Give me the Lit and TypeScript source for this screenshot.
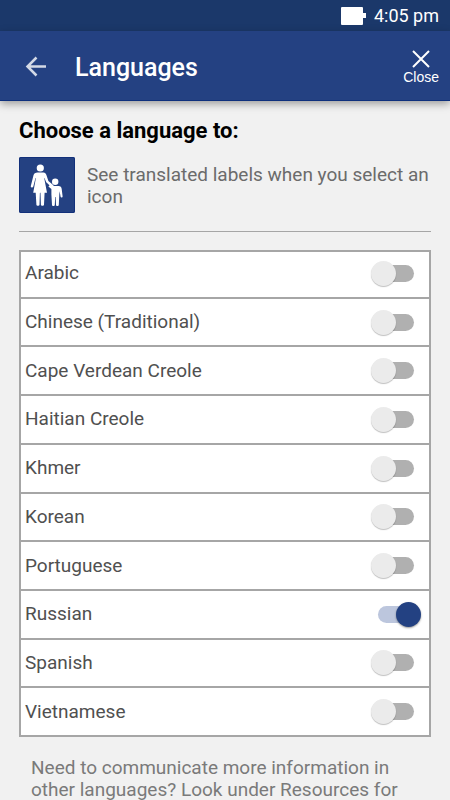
import { LitElement, html, css, svg } from "lit";
import { customElement, property, state } from "lit/decorators.js";

interface Language {
  name: string;
  on: boolean;
}

const familyIcon = svg`
  <circle cx="21.3" cy="11" r="3.6"/>
  <path d="M18.500 15.500h6c1.500 0 2.400 1 2.900 2.400l2 6 4.700 4.200c.8.7.6 1.500 0 2-.6.4-1.200.3-1.800-.2l-5.100-4.600-1.700-4.300-.3.100 2.800 14.600h-2.400l-.6 12c-.1 1.500-3 1.500-3.100 0l-.4-12h-.6l-.4 12c-.1 1.500-3 1.500-3.100 0l-.7-12h-2.500l2.700-14.600-.4-.100-2.200 8.600c-.5 1.600-2.900 1-2.500-.6l2.700-10.800c.5-1.700 1.900-2.700 4-2.700z"/>
  <circle cx="36.200" cy="24.800" r="3.200"/>
  <path d="M33.500 29h6c2 0 3 1.200 3.200 3l.9 7.200c.2 1.500-1.900 1.700-2.100.3l-.8-5.200-.4 3.200-.5 10.500c-.1 1.300-2.700 1.300-2.800 0l-.3-8h-.5l-.4 8c-.1 1.300-2.700 1.300-2.800 0l-.6-10.500v-5.500l-3-2.500 1.700-1.700c.8.800 1.400 1.200 2.400 1.200z"/>
`;

@customElement("language-row")
export class LanguageRow extends LitElement {
  @property() name = "";
  @property({ type: Boolean }) on = false;

  static styles = css`
    :host {
      display: flex;
    }
    .row {
      flex: 1;
      display: flex;
      align-items: center;
      justify-content: space-between;
      padding: 0 8px 0 4px;
      color: #505050;
      font-size: 19px;
      line-height: 22px;
    }
    .switch {
      appearance: none;
      position: relative;
      flex: none;
      width: 50px;
      height: 25px;
      margin: 0;
      cursor: pointer;
    }
    .switch::before {
      content: "";
      position: absolute;
      inset: 4px 7px;
      border-radius: 9px;
      background: #b0b0b0;
    }
    .switch::after {
      content: "";
      position: absolute;
      left: 0;
      top: 0;
      width: 25px;
      height: 25px;
      border-radius: 50%;
      background: #ebebeb;
      box-shadow: 0 1px 1px rgba(0, 0, 0, 0.25);
    }
    .switch:checked::before {
      background: #bcc6dd;
    }
    .switch:checked::after {
      left: auto;
      right: 0;
      background: #234182;
      box-shadow: 0 1px 2px rgba(0, 0, 0, 0.4);
    }
  `;

  private toggle(e: Event) {
    this.on = (e.target as HTMLInputElement).checked;
  }

  render() {
    return html`<label class="row">
      <span>${this.name}</span>
      <input class="switch" type="checkbox" role="switch" .checked=${this.on} @change=${this.toggle} />
    </label>`;
  }
}

@customElement("app-root")
export class AppRoot extends LitElement {
  @state() private languages: Language[] = [
    { name: "Arabic", on: false },
    { name: "Chinese (Traditional)", on: false },
    { name: "Cape Verdean Creole", on: false },
    { name: "Haitian Creole", on: false },
    { name: "Khmer", on: false },
    { name: "Korean", on: false },
    { name: "Portuguese", on: false },
    { name: "Russian", on: true },
    { name: "Spanish", on: false },
    { name: "Vietnamese", on: false },
  ];

  static styles = css`
    :host {
      display: flex;
      flex-direction: column;
      height: 100vh;
      background: #f1f1f1;
      font-family: Roboto, sans-serif;
    }
    .status {
      display: flex;
      align-items: center;
      justify-content: flex-end;
      gap: 8px;
      height: 31px;
      padding: 0 11px 0 0;
      box-sizing: border-box;
      flex: none;
      background: #1b386a;
      color: #fff;
      font-size: 18px;
      line-height: 22px;
    }
    .bar {
      display: flex;
      align-items: center;
      flex: none;
      height: 70px;
      box-sizing: border-box;
      padding: 0 8px 0 20px;
      border-bottom: 1px solid #0d2f7c;
      background: #244182;
      color: #fff;
      box-shadow: 0 3px 8px rgba(0, 0, 0, 0.35);
      z-index: 1;
    }
    .icon-button {
      display: flex;
      flex-direction: column;
      align-items: center;
      padding: 0;
      border: 0;
      background: none;
      color: inherit;
      font-family: "Liberation Sans", Arial, sans-serif;
      font-size: 14px;
      line-height: 16px;
      cursor: pointer;
    }
    .back {
      padding: 4px;
      color: #d3d9e6;
    }
    .title {
      flex: 1;
      margin: 4px 0 0 23px;
      font-size: 25px;
      line-height: 30px;
      font-weight: 500;
    }
    .close {
      gap: 1px;
      padding: 4px 3px 0;
    }
    .content {
      flex: 1;
      min-height: 0;
      overflow-y: auto;
      scrollbar-width: none;
      padding: 16px 19px 0;
    }
    .heading {
      margin: 0;
      font-size: 22px;
      line-height: 28px;
      font-weight: 700;
      color: #000;
    }
    .intro {
      display: flex;
      gap: 12px;
      padding: 12px 0 18px;
      border-bottom: 1px solid #a6a6a6;
    }
    .family {
      flex: none;
      border-radius: 2px;
      background: #244182;
      box-shadow: inset 0 0 0 1px #12307a;
    }
    .lead {
      margin: 7px 0 0;
      color: #6b6b6b;
      font-size: 19px;
      line-height: 22px;
    }
    .list {
      display: flex;
      flex-direction: column;
      gap: 2px;
      min-height: 487px;
      box-sizing: border-box;
      margin: 18px 0 0;
      padding: 0;
      list-style: none;
      border: 2px solid #a6a6a6;
      background: #a6a6a6;
    }
    .item {
      display: grid;
      flex: 1 0 46px;
      background: #fff;
    }
    .item:first-child {
      flex-basis: 44px;
      box-sizing: border-box;
      padding-bottom: 2px;
    }
    .note {
      margin: 20px 12px 0;
      color: #7a7a7a;
      font-size: 19px;
      line-height: 22px;
    }
  `;

  render() {
    return html`
      <div class="status">
        <svg width="25" height="18" viewBox="0 0 25 18" fill="#fff" aria-label="Battery full">
          <path d="M1 0h20q1 0 1 1v5h3v5h-3v6q0 1-1 1H1q-1 0-1-1V1q0-1 1-1z" />
        </svg>
        <span>4:05 pm</span>
      </div>
      <header class="bar">
        <button class="icon-button back" aria-label="Back">
          <svg width="24" height="24" viewBox="0 0 24 24" fill="none" stroke="currentColor" stroke-width="2.500">
            <path d="M22 12.500H3.500M12.500 3.500L3.500 12.500l9 9" />
          </svg>
        </button>
        <h1 class="title">Languages</h1>
        <button class="icon-button close">
          <svg width="18" height="18" viewBox="0 0 18 18" fill="none" stroke="currentColor" stroke-width="2">
            <path d="M1 1l16 16M17 1L1 17" />
          </svg>
          Close
        </button>
      </header>
      <main class="content">
        <h2 class="heading">Choose a language to:</h2>
        <div class="intro">
          <svg class="family" width="56" height="56" viewBox="0 0 56 56" fill="#fff" aria-hidden="true">${familyIcon}</svg>
          <p class="lead">See translated labels when you select an icon</p>
        </div>
        <ul class="list">
          ${this.languages.map(
            (l) => html`<li class="item"><language-row .name=${l.name} .on=${l.on}></language-row></li>`
          )}
        </ul>
        <p class="note">Need to communicate more information in other languages? Look under Resources for</p>
      </main>
    `;
  }
}
